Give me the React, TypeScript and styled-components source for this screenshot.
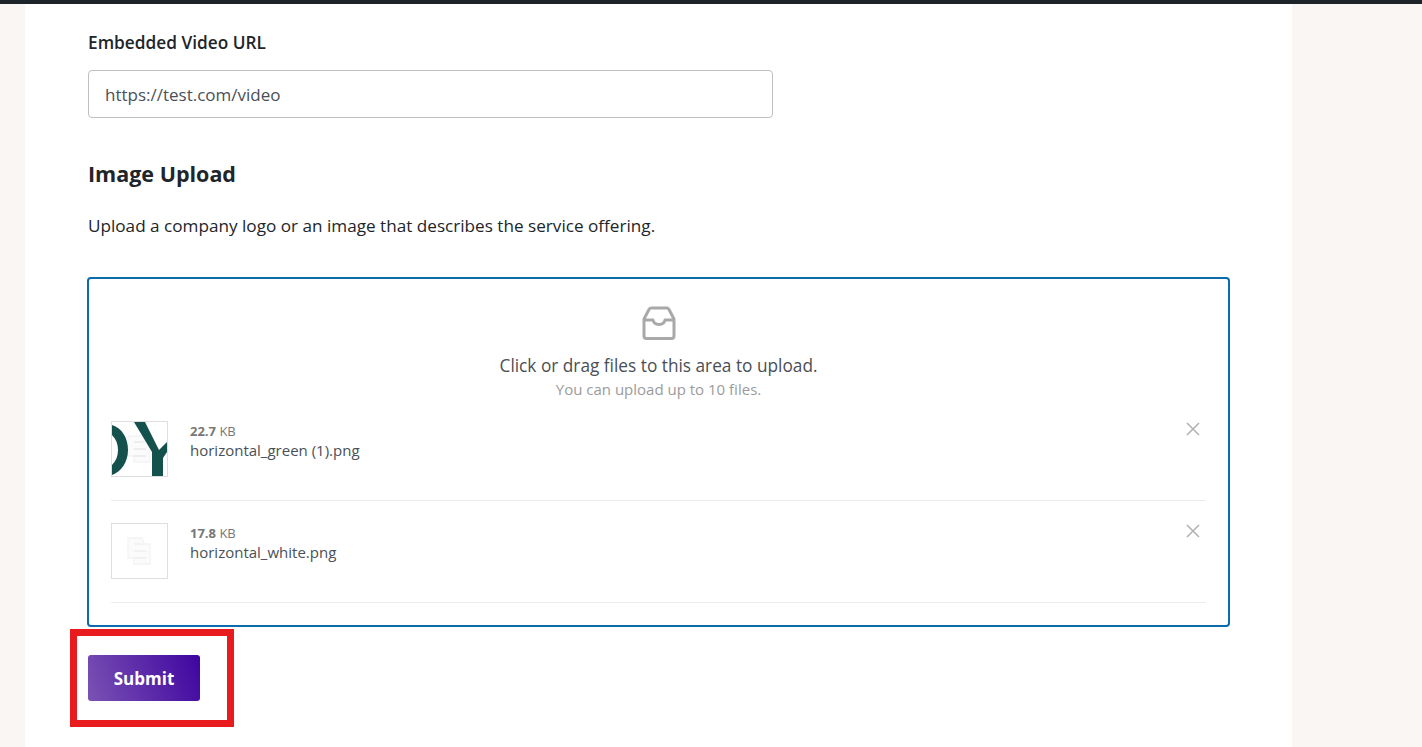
import React from "react";
import styled, { createGlobalStyle } from "styled-components";

const Global = createGlobalStyle`
  html, body { margin: 0; padding: 0; height: 747px; overflow: hidden; background: #f9f6f3; }
  body { font-family: "Open Sans", "Noto Sans", sans-serif; color: #212529; }
  #root { height: 747px; }
`;

const Page = styled.div`
  position: relative;
  height: 747px;
  overflow: hidden;
  display: flex;
  flex-direction: column;
`;
const TopBar = styled.div`
  height: 4px;
  flex: none;
  background: #1c2329;
`;
const Body = styled.div`
  flex: 1;
  padding: 0 130px 0 25px;
  display: flex;
`;
const Card = styled.main`
  flex: 1;
  background: #fff;
  padding: 28px 62px 0 63px;
`;
const FieldLabel = styled.label`
  display: block;
  font-size: 17.25px;
  line-height: 22px;
  font-weight: 600;
  color: #212529;
  margin-bottom: 16px;
`;
const TextInput = styled.div`
  box-sizing: border-box;
  width: 685px;
  height: 48px;
  border: 1px solid #bfbfbf;
  border-radius: 4px;
  padding: 0 16px;
  display: flex;
  align-items: center;
  font-size: 17px;
  color: #495057;
`;
const SectionTitle = styled.h2`
  margin: 41px 0 0;
  font-size: 21.5px;
  line-height: 30px;
  font-weight: 700;
  color: #212529;
`;
const Description = styled.p`
  margin: 25px 0 0;
  font-size: 17.15px;
  line-height: 24px;
  color: #212529;
`;
const Dropzone = styled.div`
  box-sizing: border-box;
  width: 1143px;
  height: 350px;
  margin: 39px 0 0 -1px;
  border: 2px solid #0a6bad;
  border-radius: 4px;
  padding: 24px 22px 0;
  display: flex;
  flex-direction: column;
`;
const DropHint = styled.div`
  display: flex;
  flex-direction: column;
  align-items: center;
`;
const InboxIcon = styled.svg`
  width: 40px;
  height: 40px;
  display: block;
`;
const DropTitle = styled.div`
  margin-top: 11px;
  font-size: 17.25px;
  line-height: 24px;
  color: #4a4f55;
`;
const DropSub = styled.div`
  font-size: 15px;
  line-height: 23px;
  color: #9b9b9b;
`;
const FileList = styled.div`
  margin-top: 20px;
  display: flex;
  flex-direction: column;
`;
const FileRow = styled.div`
  box-sizing: border-box;
  height: 80px;
  padding-bottom: 23px;
  margin-bottom: 22px;
  border-bottom: 1px solid #ececec;
  display: flex;
  align-items: flex-start;
  &:last-child { margin-bottom: 0; }
`;
const Thumb = styled.div`
  box-sizing: border-box;
  width: 57px;
  height: 56px;
  border: 1px solid #dedede;
  flex: none;
  overflow: hidden;
`;
const ThumbArt = styled.svg`
  display: block;
  width: 55px;
  height: 54px;
`;
const FileInfo = styled.div`
  margin-left: 22px;
  flex: 1;
`;
const FileSize = styled.div`
  font-size: 13px;
  line-height: 18px;
  margin-top: 1px;
  color: #777;
  strong { font-weight: 700; }
`;
const FileName = styled.div`
  font-size: 15px;
  line-height: 21px;
  color: #495057;
`;
const RemoveIcon = styled.svg`
  width: 14px;
  height: 14px;
  margin: 1px 6px 0 0;
  flex: none;
`;
const SubmitButton = styled.button`
  display: block;
  width: 112px;
  height: 46px;
  margin-top: 28px;
  border: 0;
  border-radius: 3px;
  padding: 0;
  background: linear-gradient(70deg, #7a52b3 0%, #3f05a0 100%);
  color: #fff;
  font-family: inherit;
  font-size: 17px;
  font-weight: 700;
`;
const Annotation = styled.div`
  position: absolute;
  left: 70px;
  top: 629px;
  width: 164px;
  height: 98px;
  box-sizing: border-box;
  border: 7px solid #e81c1f;
  pointer-events: none;
`;

const DocGhost = ({ stroke }: { stroke: string }) => (
  <g fill="none" stroke={stroke} strokeWidth="1.4">
    <path d="M16 14 H30 L32 20 H38 V40 H22 V34 H16 Z" fill="#fbfbfb" stroke="#f4f4f4" />
    <path d="M22 20 H31 M22 27 H34 M22 34 H34" />
  </g>
);

const files = [
  { size: "22.7", name: "horizontal_green (1).png", green: true },
  { size: "17.8", name: "horizontal_white.png", green: false },
];

export default function App() {
  return (
    <Page>
      <Global />
      <TopBar />
      <Body>
        <Card>
          <FieldLabel>Embedded Video URL</FieldLabel>
          <TextInput>https://test.com/video</TextInput>
          <SectionTitle>Image Upload</SectionTitle>
          <Description>Upload a company logo or an image that describes the service offering.</Description>
          <Dropzone>
            <DropHint>
              <InboxIcon viewBox="0 0 40 40" fill="none" stroke="#a9a9a9" strokeWidth="3" strokeLinejoin="round">
                <path d="M12 5 H28 Q29 5 30 6.5 L35 16 V33 Q35 35.5 32.5 35.5 H7.5 Q5 35.5 5 33 V16 L10 6.5 Q11 5 12 5 Z" />
                <path d="M5 17 H14 Q15 21.5 20 21.5 Q25 21.5 26 17 H35" />
              </InboxIcon>
              <DropTitle>Click or drag files to this area to upload.</DropTitle>
              <DropSub>You can upload up to 10 files.</DropSub>
            </DropHint>
            <FileList>
              {files.map((f) => (
                <FileRow key={f.name}>
                  <Thumb>
                    <ThumbArt viewBox="0 0 55 54">
                      <DocGhost stroke={f.green ? "#e9e9e9" : "#f0f0f0"} />
                      {f.green && (
                        <g fill="#14514c">
                          <path d="M0 3 C10 6 16 16 16 28 C16 40 9 50 0 53 V43 C4 39 6 34 6 28 C6 22 4 17 0 13 Z" />
                          <path d="M22 0 H33 L47 28 L55 20 V30 L51 36 V54 H40 V30 Z" />
                        </g>
                      )}
                    </ThumbArt>
                  </Thumb>
                  <FileInfo>
                    <FileSize><strong>{f.size}</strong> KB</FileSize>
                    <FileName>{f.name}</FileName>
                  </FileInfo>
                  <RemoveIcon viewBox="0 0 14 14" stroke="#b5b5b5" strokeWidth="1.7">
                    <path d="M1 1 L13 13 M13 1 L1 13" />
                  </RemoveIcon>
                </FileRow>
              ))}
            </FileList>
          </Dropzone>
          <SubmitButton>Submit</SubmitButton>
        </Card>
      </Body>
      <Annotation />
    </Page>
  );
}
